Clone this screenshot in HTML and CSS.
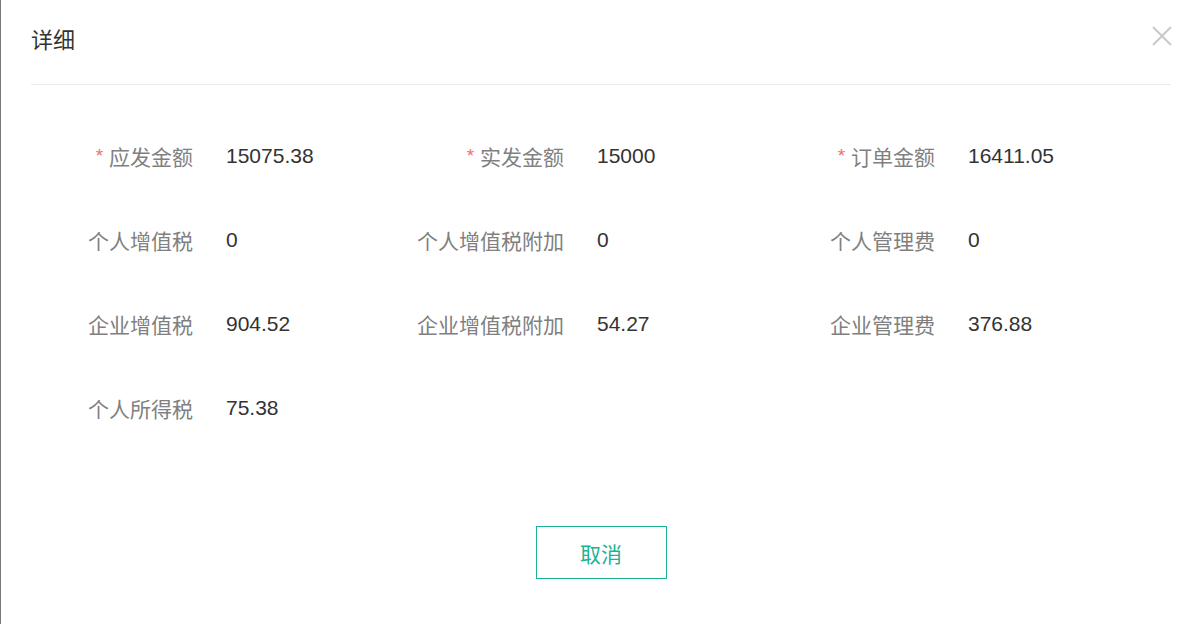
FILE: index.html
```html
<!DOCTYPE html>
<html lang="zh">
<head>
<meta charset="utf-8">
<title>详细</title>
<link rel="stylesheet" href="styles.css">
</head>
<body>
<div class="dialog">
  <div class="header">
    <span class="title">详细</span>
    <button class="close" aria-label="关闭">
      <svg width="20" height="20" viewBox="0 0 20 20"><path d="M1 1 L19 19 M19 1 L1 19" stroke="#c9c9c9" stroke-width="2" fill="none"/></svg>
    </button>
  </div>
  <div class="form">
    <div class="cell"><span class="label"><i class="req">*</i> 应发金额</span><span class="value">15075.38</span></div>
    <div class="cell"><span class="label"><i class="req">*</i> 实发金额</span><span class="value">15000</span></div>
    <div class="cell"><span class="label"><i class="req">*</i> 订单金额</span><span class="value">16411.05</span></div>
    <div class="cell"><span class="label">个人增值税</span><span class="value">0</span></div>
    <div class="cell"><span class="label">个人增值税附加</span><span class="value">0</span></div>
    <div class="cell"><span class="label">个人管理费</span><span class="value">0</span></div>
    <div class="cell"><span class="label">企业增值税</span><span class="value">904.52</span></div>
    <div class="cell"><span class="label">企业增值税附加</span><span class="value">54.27</span></div>
    <div class="cell"><span class="label">企业管理费</span><span class="value">376.88</span></div>
    <div class="cell"><span class="label">个人所得税</span><span class="value">75.38</span></div>
  </div>
  <div class="footer">
    <button class="cancel">取消</button>
  </div>
</div>
</body>
</html>
```
FILE: styles.css
```css
html, body {
  margin: 0;
  padding: 0;
  background: #fff;
}
body {
  font-family: "Liberation Sans", "Noto Sans CJK SC", sans-serif;
  width: 1199px;
  height: 624px;
  overflow: hidden;
  box-sizing: border-box;
  border-left: 1px solid #7a7a7a;
}
.dialog {
  position: relative;
  height: 100%;
}
.header {
  margin: 0 28px 0 30px;
  padding: 27px 0 29px 0;
  border-bottom: 1px solid #e8eaec;
}
.title {
  display: block;
  font-size: 22px;
  line-height: 28px;
  color: #333;
}
.close {
  position: absolute;
  top: 26px;
  right: 27px;
  width: 20px;
  height: 20px;
  padding: 0;
  border: 0;
  background: transparent;
  display: flex;
}
.form {
  display: grid;
  grid-template-columns: repeat(3, 371px);
  grid-auto-rows: 84px;
  padding: 29px 0 0 42px;
}
.cell {
  display: flex;
  align-items: center;
  font-size: 21px;
}
.label {
  width: 150px;
  text-align: right;
  color: #808080;
  white-space: nowrap;
}
.req {
  font-style: normal;
  color: #f56c6c;
  font-size: 19px;
  vertical-align: 3px;
}
.value {
  margin-left: 33px;
  color: #333;
}
.footer {
  display: flex;
  justify-content: center;
  padding: 76px 0 0 2px;
}
.cancel {
  width: 131px;
  height: 53px;
  border: 1px solid #1ab394;
  background: #fff;
  color: #1ab394;
  font-family: "Liberation Sans", "Noto Sans CJK SC", sans-serif;
  font-size: 21px;
  padding: 0;
}
```
